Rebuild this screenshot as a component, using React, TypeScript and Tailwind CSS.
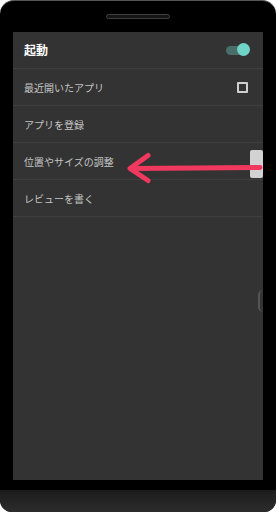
import React from "react";

const font = { fontFamily: '"Noto Sans CJK JP", "Noto Sans", sans-serif' };

function Row({ children, right }: { children: React.ReactNode; right?: React.ReactNode }) {
  return (
    <div className="flex h-[37px] items-center justify-between border-b border-[#3f3f3f] pl-[11px] pr-[15px]">
      {children}
      {right}
    </div>
  );
}

export default function App() {
  return (
    <div className="w-[276px] h-[512px] bg-white overflow-hidden" style={font}>
      <div className="relative flex h-[512px] w-[276px] flex-col rounded-t-[14px] rounded-b-[12px] bg-black border-t border-[#555]">
        <div className="flex h-[31px] items-start justify-center pt-[13px]">
          <div className="h-[5px] w-[64px] rounded-full border border-[#3e3e3e] bg-[#141414]" />
        </div>
        <div className="relative ml-[13px] flex h-[448px] w-[250px] flex-col bg-[#333333]">
          <Row
            right={
              <div className="relative h-[12px] w-[22px]">
                <div className="absolute left-0 top-[2px] h-[9px] w-[20px] rounded-full bg-[#4a6e69]" />
                <div className="absolute right-[-2px] top-[-1px] h-[13px] w-[13px] rounded-full bg-[#6fd3c7]" />
              </div>
            }
          >
            <span className="text-[12px] font-bold text-white">起動</span>
          </Row>
          <Row right={<div className="h-[11px] w-[11px] rounded-[1px] border-[2px] border-[#cfcfcf]" />}>
            <span className="text-[10px] text-[#c4c4c4]">最近開いたアプリ</span>
          </Row>
          <Row>
            <span className="text-[10px] text-[#c4c4c4]">アプリを登録</span>
          </Row>
          <Row>
            <span className="text-[10px] text-[#c4c4c4]">位置やサイズの調整</span>
          </Row>
          <Row>
            <span className="text-[10px] text-[#c4c4c4]">レビューを書く</span>
          </Row>
          <div className="absolute right-0 top-[118px] h-[28px] w-[13px] rounded-[2px] bg-[#d2d2d2]" />
          <div className="absolute right-0 top-[258px] h-[22px] w-[5px] rounded-l-full border-l-2 border-[#555]" />
          <svg className="absolute left-0 top-0" width="250" height="448" viewBox="0 0 250 448">
            <g stroke="#f1385e" strokeWidth="5" strokeLinecap="round" strokeLinejoin="round" fill="none">
              <path d="M247 135.5 L118 136.5" />
              <path d="M135 123.5 L117 136.5 L135 148.5" />
            </g>
          </svg>
        </div>
        <div className="mt-[10px] h-[22px] w-[276px] rounded-b-[12px] bg-gradient-to-b from-[#1c1c1c] to-[#2c2c2c]" />
      </div>
    </div>
  );
}
